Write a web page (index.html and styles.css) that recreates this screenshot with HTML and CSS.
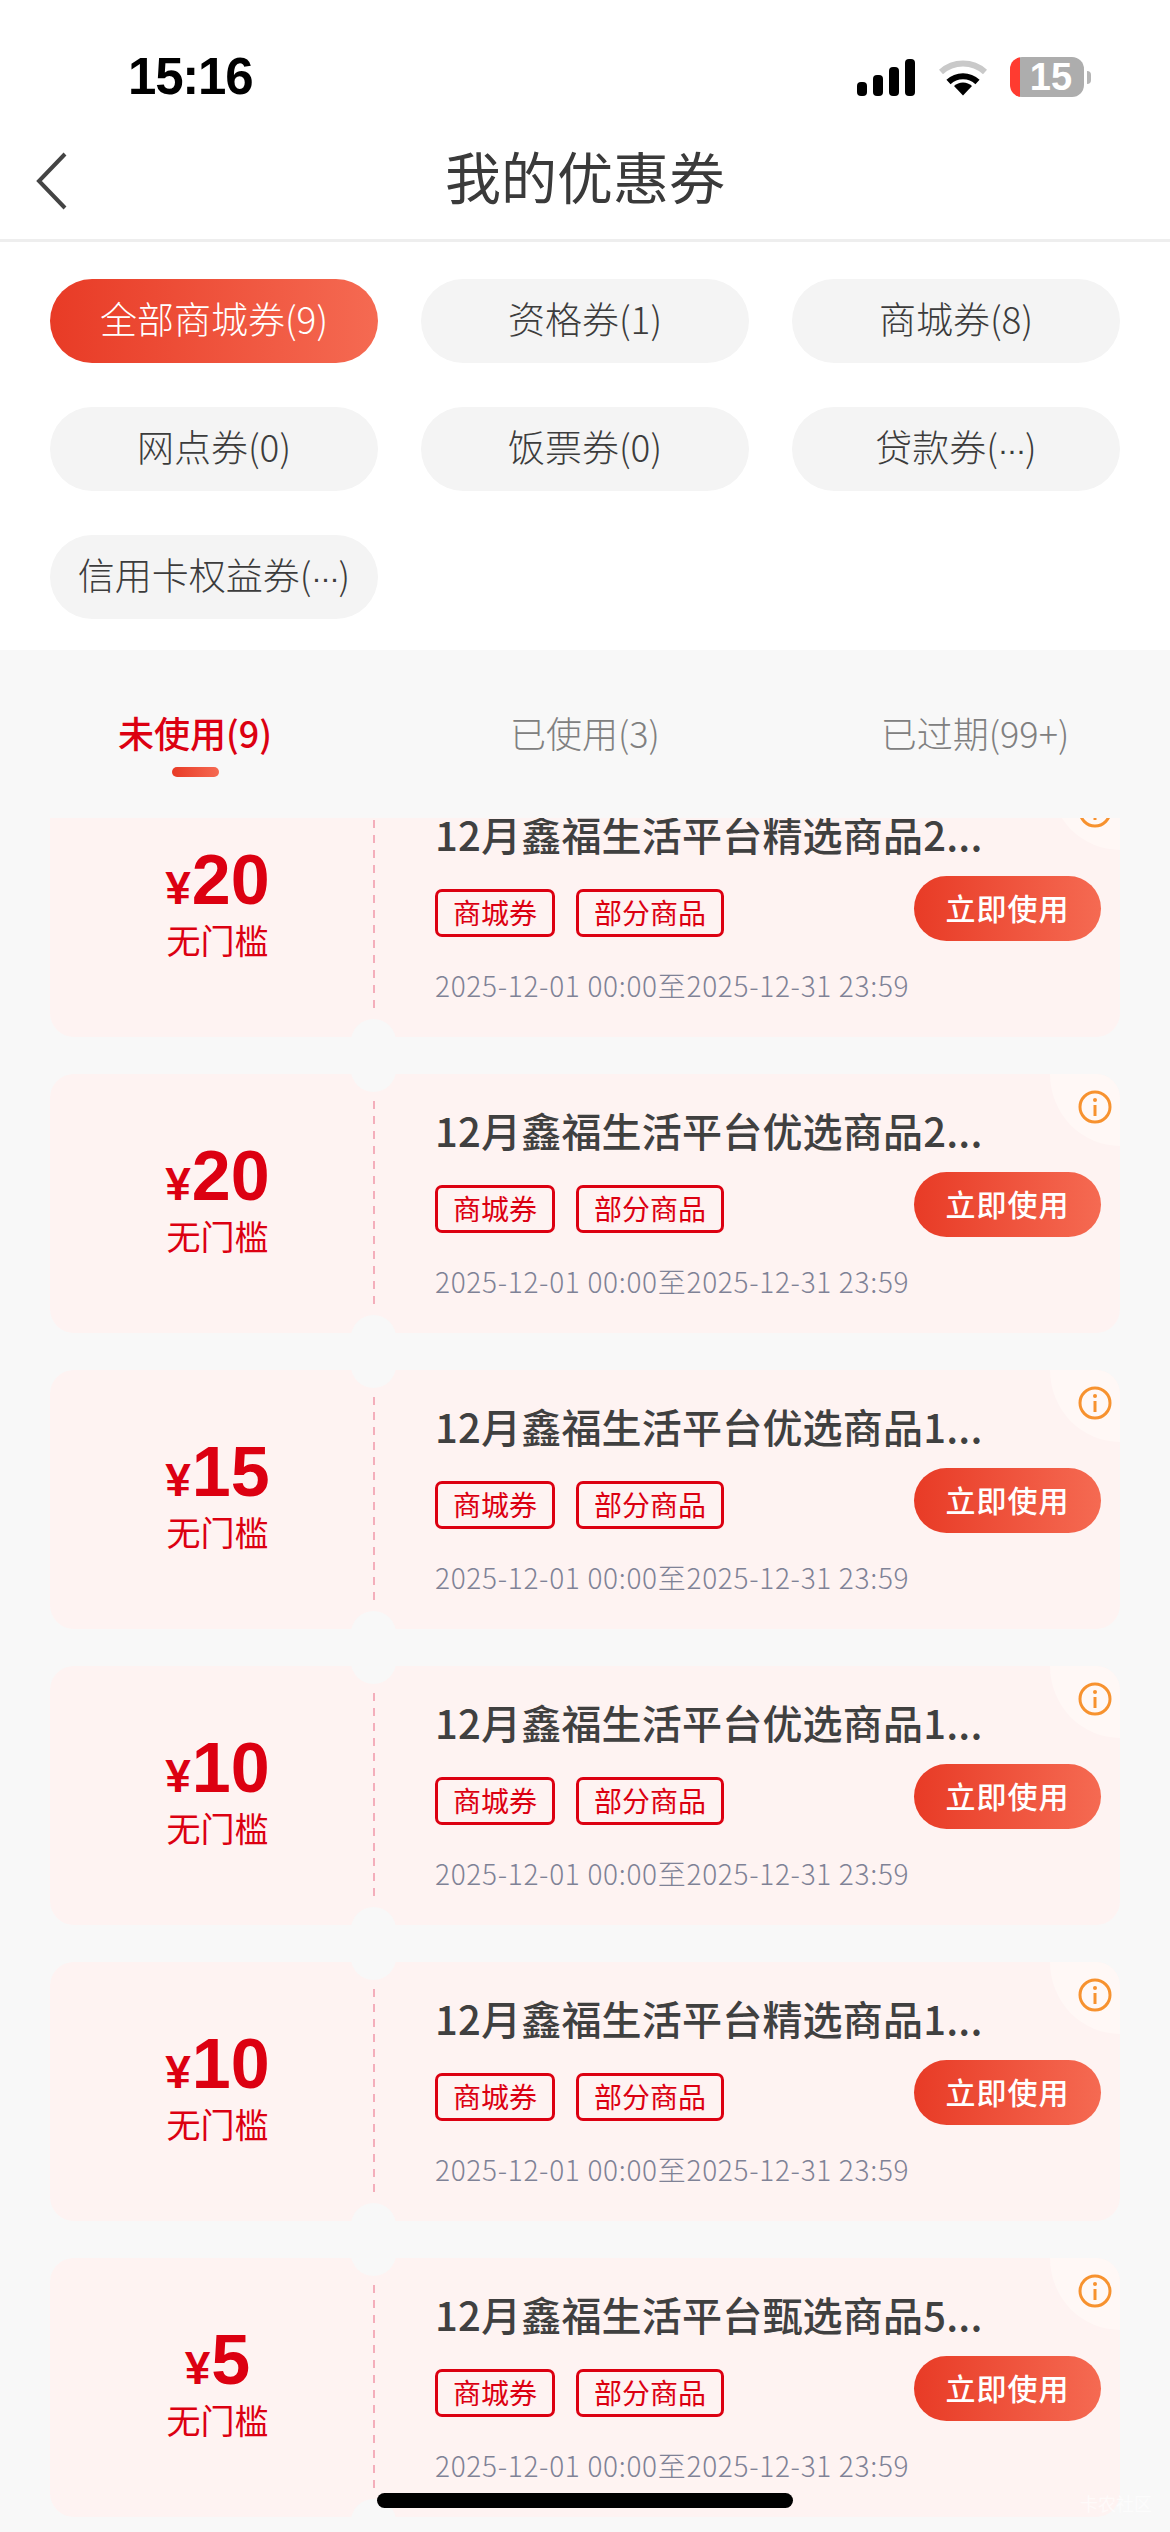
FILE: index.html
```html
<!DOCTYPE html>
<html lang="zh-CN">
<head>
<meta charset="utf-8">
<title>我的优惠券</title>
<link rel="stylesheet" href="styles.css">
</head>
<body>
<div class="page">
  <header class="status">
    <span class="time">15:16</span>
    <div class="status-icons">
      <div class="signal"><i class="b1"></i><i class="b2"></i><i class="b3"></i><i class="b4"></i></div>
      <svg class="wifi" width="50" height="38" viewBox="0 0 50 38"><path d="M3 14A33 33 0 0 1 47 14" fill="none" stroke="#c9c9c9" stroke-width="6"/><path d="M10.500 24A21 21 0 0 1 39.500 24" fill="none" stroke="#000" stroke-width="6"/><path d="M25 37.500L16 28A13 13 0 0 1 34 28Z" fill="#000"/></svg>
      <div class="battery"><span class="level">15</span></div>
      <span class="nub"></span>
    </div>
  </header>
  <nav class="navbar">
    <svg class="back" width="34" height="60" viewBox="0 0 34 60"><path d="M30 3L4 30L30 57" fill="none" stroke="#444" stroke-width="4"/></svg>
    <h1 class="nav-title">我的优惠券</h1>
  </nav>
  <section class="chips">
    <div class="chip active">全部商城券(9)</div>
    <div class="chip">资格券(1)</div>
    <div class="chip">商城券(8)</div>
    <div class="chip">网点券(0)</div>
    <div class="chip">饭票券(0)</div>
    <div class="chip">贷款券(<span class="dots">···</span>)</div>
    <div class="chip">信用卡权益券(<span class="dots">···</span>)</div>
  </section>
  <section class="tabs">
    <div class="tab active">未使用(9)</div>
    <div class="tab">已使用(3)</div>
    <div class="tab">已过期(99+)</div>
  </section>
  <main class="list">
    <div class="list-inner">

      <article class="card">
        <div class="value"><div class="amount"><span class="yen">¥</span><span class="num">20</span></div><div class="cond">无门槛</div></div>
        <div class="perf"></div>
        <div class="body">
          <div class="name">12月鑫福生活平台精选商品2...</div>
          <div class="mid"><div class="tags"><span class="tag">商城券</span><span class="tag">部分商品</span></div><div class="use">立即使用</div></div>
          <div class="date">2025-12-01 00:00至2025-12-31 23:59</div>
        </div>
        <div class="corner"><svg width="34" height="34" viewBox="0 0 34 34"><circle cx="17" cy="17" r="15" fill="none" stroke="#f7922f" stroke-width="3"/><path d="M17 15V26" stroke="#f7922f" stroke-width="3"/><circle cx="17" cy="10" r="2" fill="#f7922f"/></svg></div>
      </article>

      <article class="card">
        <div class="value"><div class="amount"><span class="yen">¥</span><span class="num">20</span></div><div class="cond">无门槛</div></div>
        <div class="perf"></div>
        <div class="body">
          <div class="name">12月鑫福生活平台优选商品2...</div>
          <div class="mid"><div class="tags"><span class="tag">商城券</span><span class="tag">部分商品</span></div><div class="use">立即使用</div></div>
          <div class="date">2025-12-01 00:00至2025-12-31 23:59</div>
        </div>
        <div class="corner"><svg width="34" height="34" viewBox="0 0 34 34"><circle cx="17" cy="17" r="15" fill="none" stroke="#f7922f" stroke-width="3"/><path d="M17 15V26" stroke="#f7922f" stroke-width="3"/><circle cx="17" cy="10" r="2" fill="#f7922f"/></svg></div>
      </article>

      <article class="card">
        <div class="value"><div class="amount"><span class="yen">¥</span><span class="num">15</span></div><div class="cond">无门槛</div></div>
        <div class="perf"></div>
        <div class="body">
          <div class="name">12月鑫福生活平台优选商品1...</div>
          <div class="mid"><div class="tags"><span class="tag">商城券</span><span class="tag">部分商品</span></div><div class="use">立即使用</div></div>
          <div class="date">2025-12-01 00:00至2025-12-31 23:59</div>
        </div>
        <div class="corner"><svg width="34" height="34" viewBox="0 0 34 34"><circle cx="17" cy="17" r="15" fill="none" stroke="#f7922f" stroke-width="3"/><path d="M17 15V26" stroke="#f7922f" stroke-width="3"/><circle cx="17" cy="10" r="2" fill="#f7922f"/></svg></div>
      </article>

      <article class="card">
        <div class="value"><div class="amount"><span class="yen">¥</span><span class="num">10</span></div><div class="cond">无门槛</div></div>
        <div class="perf"></div>
        <div class="body">
          <div class="name">12月鑫福生活平台优选商品1...</div>
          <div class="mid"><div class="tags"><span class="tag">商城券</span><span class="tag">部分商品</span></div><div class="use">立即使用</div></div>
          <div class="date">2025-12-01 00:00至2025-12-31 23:59</div>
        </div>
        <div class="corner"><svg width="34" height="34" viewBox="0 0 34 34"><circle cx="17" cy="17" r="15" fill="none" stroke="#f7922f" stroke-width="3"/><path d="M17 15V26" stroke="#f7922f" stroke-width="3"/><circle cx="17" cy="10" r="2" fill="#f7922f"/></svg></div>
      </article>

      <article class="card">
        <div class="value"><div class="amount"><span class="yen">¥</span><span class="num">10</span></div><div class="cond">无门槛</div></div>
        <div class="perf"></div>
        <div class="body">
          <div class="name">12月鑫福生活平台精选商品1...</div>
          <div class="mid"><div class="tags"><span class="tag">商城券</span><span class="tag">部分商品</span></div><div class="use">立即使用</div></div>
          <div class="date">2025-12-01 00:00至2025-12-31 23:59</div>
        </div>
        <div class="corner"><svg width="34" height="34" viewBox="0 0 34 34"><circle cx="17" cy="17" r="15" fill="none" stroke="#f7922f" stroke-width="3"/><path d="M17 15V26" stroke="#f7922f" stroke-width="3"/><circle cx="17" cy="10" r="2" fill="#f7922f"/></svg></div>
      </article>

      <article class="card">
        <div class="value"><div class="amount"><span class="yen">¥</span><span class="num">5</span></div><div class="cond">无门槛</div></div>
        <div class="perf"></div>
        <div class="body">
          <div class="name">12月鑫福生活平台甄选商品5...</div>
          <div class="mid"><div class="tags"><span class="tag">商城券</span><span class="tag">部分商品</span></div><div class="use">立即使用</div></div>
          <div class="date">2025-12-01 00:00至2025-12-31 23:59</div>
        </div>
        <div class="corner"><svg width="34" height="34" viewBox="0 0 34 34"><circle cx="17" cy="17" r="15" fill="none" stroke="#f7922f" stroke-width="3"/><path d="M17 15V26" stroke="#f7922f" stroke-width="3"/><circle cx="17" cy="10" r="2" fill="#f7922f"/></svg></div>
      </article>

    </div>
  </main>
  <div class="home-bar"></div>
  <div class="watermark">卡农社区</div>
</div>
</body>
</html>
```

FILE: styles.css
```css
* { box-sizing: border-box; }
html, body { margin: 0; padding: 0; }
body {
  font-family: "Noto Sans CJK SC", "Noto Sans", sans-serif;
  background: #f8f8f8;
}
.page {
  position: relative;
  width: 1170px;
  height: 2532px;
  overflow: hidden;
  display: flex;
  flex-direction: column;
  background: #f8f8f8;
}

/* status bar */
.status {
  height: 130px;
  flex: none;
  background: #fff;
  display: flex;
  justify-content: space-between;
  align-items: flex-start;
  padding: 45px 79px 0 128px;
}
.time {
  font-family: "Liberation Sans", sans-serif;
  font-weight: 700;
  font-size: 51px;
  line-height: 64px;
  letter-spacing: -1.2px;
  color: #000;
}
.status-icons {
  display: flex;
  align-items: center;
  height: 40px;
  margin-top: 12px;
}
.signal {
  display: flex;
  align-items: flex-end;
  gap: 6px;
  height: 37px;
  margin-right: 23px;
}
.signal i {
  display: block;
  width: 10px;
  border-radius: 4px;
  background: #000;
}
.b1 { height: 14px; }
.b2 { height: 21px; }
.b3 { height: 29px; }
.b4 { height: 37px; }
.wifi { margin-right: 22px; }
.battery {
  width: 74px;
  height: 40px;
  border-radius: 12px;
  background: linear-gradient(to right, #ff3b30 10px, #adadad 10px);
  display: flex;
  align-items: center;
  justify-content: center;
  padding-left: 8px;
}
.level {
  font-family: "Liberation Sans", sans-serif;
  font-weight: 700;
  font-size: 38px;
  line-height: 40px;
  color: #fff;
}
.nub {
  width: 4px;
  height: 13px;
  margin-left: 3px;
  border-radius: 0 6px 6px 0;
  background: #b5b5b5;
}

/* nav */
.navbar {
  height: 112px;
  flex: none;
  background: #fff;
  border-bottom: 3px solid #eeeeee;
  position: relative;
  display: flex;
  align-items: center;
  justify-content: center;
}
.back {
  position: absolute;
  left: 35px;
  top: 21px;
}
.nav-title {
  margin: -6px 0 13px;
  font-size: 56px;
  font-weight: 400;
  line-height: 96px;
  color: #3a3a3a;
}

/* chips */
.chips {
  flex: none;
  height: 408px;
  background: #fff;
  padding: 37px 50px 0;
  display: grid;
  grid-template-columns: repeat(3, minmax(0, 1fr));
  grid-auto-rows: 84px;
  column-gap: 43px;
  row-gap: 44px;
  align-content: start;
}
.chip {
  border-radius: 42px;
  background: #f4f4f4;
  color: #3c3c3c;
  font-size: 37px;
  font-weight: 300;
  line-height: 79px;
  text-align: center;
  white-space: nowrap;
}
.chip.active {
  color: #fff;
  background: linear-gradient(to right, #e83b26, #f56a52);
}
.dots {
  font-family: "Liberation Sans", sans-serif;
  font-size: 30px;
  letter-spacing: -1px;
  vertical-align: 2px;
}

/* tabs */
.tabs {
  flex: none;
  height: 168px;
  display: grid;
  grid-template-columns: repeat(3, minmax(0, 1fr));
  background: #f8f8f8;
}
.tab {
  position: relative;
  text-align: center;
  font-size: 36px;
  font-weight: 300;
  color: #808080;
  line-height: 60px;
  padding-top: 52px;
  white-space: nowrap;
}
.tab.active {
  color: #dc0011;
  font-weight: 500;
}
.tab.active::after {
  content: "";
  position: absolute;
  left: 172px;
  top: 117px;
  width: 47px;
  height: 10px;
  border-radius: 5px;
  background: linear-gradient(to right, #e83b26, #f56a52);
}

/* list */
.list {
  flex: 1;
  min-height: 0;
  overflow: hidden;
}
.list-inner {
  margin-top: -40px;
  padding: 0 50px;
  display: flex;
  flex-direction: column;
  gap: 37px;
}
.card {
  position: relative;
  height: 259px;
  flex: none;
  display: flex;
  border-radius: 24px;
  background: #fef3f2;
  overflow: hidden;
}
.card::before,
.card::after {
  content: "";
  position: absolute;
  left: 301px;
  width: 45px;
  height: 45px;
  border-radius: 50%;
  background: #f8f8f8;
}
.card::before { top: -27px; }
.card::after { bottom: -27px; }
.value {
  width: 323px;
  flex: none;
  padding-left: 12px;
  display: flex;
  flex-direction: column;
  align-items: center;
  padding-top: 63px;
}
.amount {
  display: flex;
  align-items: baseline;
  font-family: "Liberation Sans", sans-serif;
  font-weight: 700;
  color: #dc0011;
  line-height: 78px;
}
.yen {
  font-size: 46px;
  margin-right: 1px;
}
.num {
  font-size: 70px;
}
.cond {
  font-size: 34px;
  line-height: 44px;
  color: #dc0011;
  margin-top: -9px;
}
.perf {
  flex: none;
  width: 2px;
  margin: 27px 0 22px;
  background: repeating-linear-gradient(to bottom, #f4aebb 0 8px, transparent 8px 15px);
}
.body {
  flex: 1;
  min-width: 0;
  padding: 27px 19px 0 60px;
  display: flex;
  flex-direction: column;
}
.name {
  font-size: 40px;
  font-weight: 500;
  line-height: 58px;
  color: #404040;
  white-space: nowrap;
  letter-spacing: 0.2px;
}
.mid {
  display: flex;
  justify-content: space-between;
  margin-top: 13px;
  height: 65px;
}
.tags {
  display: flex;
  gap: 21px;
  margin-top: 13px;
}
.tag {
  height: 48px;
  padding: 0 15px;
  border: 3px solid #dc0011;
  border-radius: 7px;
  font-size: 28px;
  line-height: 41px;
  color: #dc0011;
  white-space: nowrap;
}
.use {
  width: 187px;
  height: 65px;
  border-radius: 33px;
  background: linear-gradient(to right, #e83b26, #f56a52);
  color: #fff;
  font-size: 30px;
  font-weight: 500;
  line-height: 63px;
  text-align: center;
  letter-spacing: 1px;
}
.date {
  margin-top: 24px;
  font-size: 28px;
  font-weight: 300;
  line-height: 40px;
  color: #7f8296;
  white-space: nowrap;
  letter-spacing: 0.7px;
}
.corner {
  position: absolute;
  right: 0;
  top: 0;
  width: 70px;
  height: 72px;
  border-bottom-left-radius: 100%;
  background: #fff8f6;
}
.corner svg {
  position: absolute;
  left: 28px;
  top: 16px;
}

/* overlays */
.home-bar {
  position: absolute;
  left: 377px;
  top: 2493px;
  width: 416px;
  height: 15px;
  border-radius: 8px;
  background: #000;
}
.watermark {
  position: absolute;
  left: 1080px;
  top: 2488px;
  font-size: 18px;
  line-height: 30px;
  color: rgba(255, 255, 255, 0.6);
  white-space: nowrap;
}
```
